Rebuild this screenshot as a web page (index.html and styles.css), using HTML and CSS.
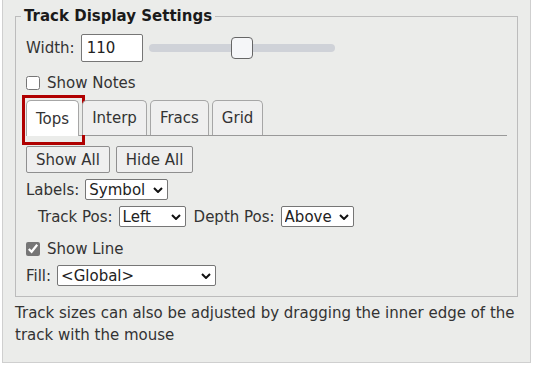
FILE: index.html
```html
<!DOCTYPE html>
<html lang="en">
<head>
    <meta charset="UTF-8">
    <meta name="viewport" content="width=device-width, initial-scale=1.0">
    <title>Track Display Settings</title>
    <link rel="stylesheet" href="styles.css">
</head>
<body>

<div class="panel">
    <fieldset class="settings">
        <legend>Track Display Settings</legend>

        <div class="row width-row">
            <label for="track-width">Width:</label>
            <input id="track-width" class="num" type="text" value="110">
            <input class="slider" type="range" min="20" max="200" value="110">
        </div>

        <label class="check-row notes-row"><input type="checkbox"> Show Notes</label>

        <div class="tabs">
            <button class="tab active">Tops<span class="highlight"></span></button>
            <button class="tab">Interp</button>
            <button class="tab">Fracs</button>
            <button class="tab">Grid</button>
        </div>

        <div class="row btn-row">
            <button class="btn">Show All</button>
            <button class="btn">Hide All</button>
        </div>

        <div class="row">
            <label>Labels:</label>
            <span class="select" style="width: 83px">
                <select><option>Symbol</option><option>Name</option></select>
                <svg viewBox="0 0 10 6" width="10" height="6"><path d="M1 1l4 4 4-4" fill="none" stroke="#111" stroke-width="2"/></svg>
            </span>
        </div>

        <div class="row indent">
            <label>Track Pos:</label>
            <span class="select" style="width: 67px">
                <select><option>Left</option><option>Right</option></select>
                <svg viewBox="0 0 10 6" width="10" height="6"><path d="M1 1l4 4 4-4" fill="none" stroke="#111" stroke-width="2"/></svg>
            </span>
            <label class="spaced">Depth Pos:</label>
            <span class="select" style="width: 73px">
                <select><option>Above</option><option>Below</option></select>
                <svg viewBox="0 0 10 6" width="10" height="6"><path d="M1 1l4 4 4-4" fill="none" stroke="#111" stroke-width="2"/></svg>
            </span>
        </div>

        <label class="check-row line-row"><input type="checkbox" checked> Show Line</label>

        <div class="row">
            <label>Fill:</label>
            <span class="select" style="width: 159px">
                <select><option>&lt;Global&gt;</option></select>
                <svg viewBox="0 0 10 6" width="10" height="6"><path d="M1 1l4 4 4-4" fill="none" stroke="#111" stroke-width="2"/></svg>
            </span>
        </div>
    </fieldset>

    <p class="hint">
        Track sizes can also be adjusted by dragging the inner edge of the track with the mouse
    </p>
</div>

</body>
</html>
```

FILE: styles.css
```css
body {
    margin: 0;
    font-family: Tahoma, 'DejaVu Sans', sans-serif;
    font-size: 15px;
    color: #333;
    background-color: #fff;
}

.panel {
    margin-left: 2px;
    width: 529px;
    box-sizing: border-box;
    background-color: #ebecea;
    border: 1px solid #cfcfcf;
    border-top: none;
    padding: 7px 12px 16px;
}

.settings {
    margin: 0;
    border: 1px solid #bcbcbc;
    padding: 0 10px 10px;
}

.settings legend {
    margin-left: -5px;
    padding: 0 3px;
    font-weight: bold;
    color: #1a1a1a;
    line-height: 18px;
}

.row {
    display: flex;
    align-items: center;
    gap: 6px;
    margin-top: 6px;
}

.row label {
    white-space: nowrap;
}

.row .spaced {
    margin-left: 2px;
}

.indent {
    padding-left: 12px;
}

.width-row {
    margin-top: 9px;
}

.num {
    width: 62px;
    height: 28px;
    box-sizing: border-box;
    border: 1px solid #767676;
    border-radius: 2px;
    padding: 0 5px;
    font: inherit;
    color: #222;
    background-color: #fff;
}

.slider {
    -webkit-appearance: none;
    appearance: none;
    width: 186px;
    height: 22px;
    margin: 0;
    background: transparent;
}

.slider::-webkit-slider-runnable-track {
    height: 8px;
    border-radius: 4px;
    background-color: #cfd2d8;
}

.slider::-webkit-slider-thumb {
    -webkit-appearance: none;
    width: 22px;
    height: 22px;
    margin-top: -7px;
    box-sizing: border-box;
    border: 1.5px solid #666;
    border-radius: 4px;
    background-color: #f5f6f8;
}

.check-row {
    display: flex;
    align-items: center;
    gap: 7px;
    height: 20px;
}

.notes-row {
    margin-top: 11px;
}

.line-row {
    margin-top: 12px;
}

.check-row input {
    width: 14px;
    height: 14px;
    margin: 0;
    accent-color: #767676;
}

.tabs {
    display: flex;
    gap: 3px;
    margin-top: 7px;
    border-bottom: 1px solid #999;
}

.tab {
    position: relative;
    font: inherit;
    color: #333;
    height: 35px;
    padding: 0 9px;
    border: 1px solid #a6a6a6;
    border-bottom: none;
    border-radius: 5px 5px 0 0;
    background-color: #efefef;
}

.tab.active {
    background-color: #fff;
    margin-bottom: -1px;
    height: 36px;
}

.highlight {
    position: absolute;
    top: -6px;
    left: -5px;
    right: -7px;
    bottom: -9px;
    border: 3px solid #b00000;
}

.btn-row {
    margin-top: 10px;
    gap: 6px;
}

.btn {
    font: inherit;
    color: #333;
    height: 27px;
    padding: 0 9px;
    border: 1px solid #8f8f8f;
    border-radius: 2px;
    background-color: #efefef;
}

.select {
    position: relative;
    display: inline-block;
    height: 21px;
}

.select select {
    -webkit-appearance: none;
    appearance: none;
    width: 100%;
    height: 100%;
    box-sizing: border-box;
    border: 1px solid #767676;
    border-radius: 2px;
    padding: 0 0 0 3px;
    font: inherit;
    color: #222;
    background-color: #fff;
}

.select svg {
    position: absolute;
    right: 5px;
    top: 8px;
    pointer-events: none;
}

.hint {
    margin: 5px 0 0;
    line-height: 22px;
}
```
